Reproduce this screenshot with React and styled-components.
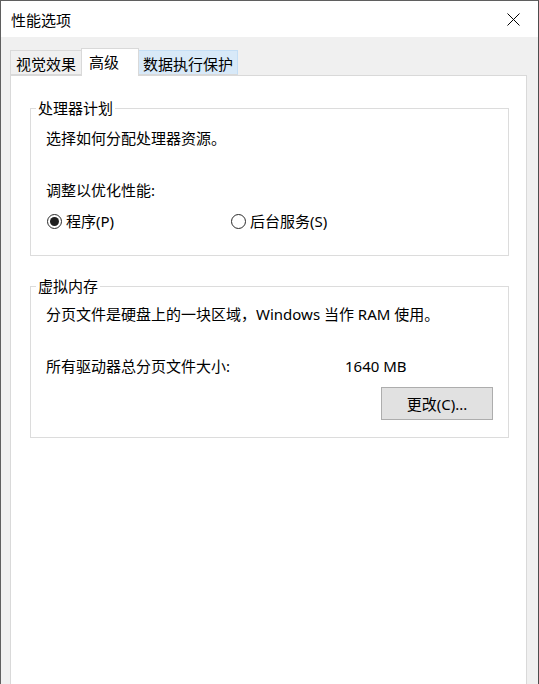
import React, { useState } from 'react';
import styled, { createGlobalStyle } from 'styled-components';

const GlobalStyle = createGlobalStyle`
  html, body {
    margin: 0;
    padding: 0;
    background: #f0f0f0;
  }
  body {
    font-family: 'Noto Sans', 'Noto Sans CJK SC', sans-serif;
    font-size: 15px;
    color: #000;
  }
`;

const Window = styled.div`
  width: 539px;
  height: 684px;
  box-sizing: border-box;
  overflow: hidden;
  display: flex;
  flex-direction: column;
  background: #f0f0f0;
  border-top: 1px solid #5f5f5f;
  border-left: 1px solid #5f5f5f;
  border-right: 1px solid #4d4d4d;
`;

const TitleBar = styled.div`
  height: 36px;
  flex-shrink: 0;
  display: flex;
  align-items: center;
  justify-content: space-between;
  background: #fff;
  padding-left: 10px;
  padding-top: 2px;
  box-sizing: border-box;
  line-height: 20px;
`;

const CloseButton = styled.button`
  width: 46px;
  height: 36px;
  margin-top: -2px;
  margin-right: 2px;
  border: 0;
  padding: 0;
  background: transparent;
  display: flex;
  align-items: center;
  justify-content: center;
`;

const Body = styled.div`
  flex: 1;
  display: flex;
  flex-direction: column;
  padding: 11px 0 0 9px;
`;

const TabRow = styled.div`
  display: flex;
  align-items: flex-end;
  height: 27px;
`;

const Tab = styled.div`
  box-sizing: border-box;
  width: ${p => p.$width}px;
  height: ${p => (p.$active ? 28 : 25)}px;
  margin-bottom: ${p => (p.$active ? -1 : 0)}px;
  padding-left: ${p => p.$pad}px;
  padding-top: 3px;
  line-height: 20px;
  white-space: nowrap;
  position: relative;
  z-index: ${p => (p.$active ? 1 : 0)};
  background: ${p => (p.$active ? '#fff' : p.$hover ? '#d8e9f8' : '#f0f0f0')};
  border: 1px solid ${p => (p.$hover ? '#c4def5' : '#d9d9d9')};
  border-bottom: ${p => (p.$active ? 'none' : '1px solid #d9d9d9')};
  margin-left: ${p => (p.$first ? 0 : -1)}px;
`;

const Panel = styled.div`
  width: 517px;
  height: 640px;
  box-sizing: border-box;
  background: #fff;
  border: 1px solid #d9d9d9;
  padding: 22px 17px 0 19px;
  display: flex;
  flex-direction: column;
  gap: 20px;
`;

const Group = styled.fieldset`
  margin: 0;
  border: 1px solid #dcdcdc;
  padding: ${p => p.$top}px 15px ${p => p.$bottom}px 15px;
  min-width: 0;
  display: flex;
  flex-direction: column;
`;

const Legend = styled.legend`
  padding: 0 2px;
  margin-left: -10px;
  line-height: 20px;
`;

const Line = styled.div`
  line-height: 20px;
  margin-top: ${p => p.$gap || 0}px;
  white-space: nowrap;
`;

const RadioRow = styled.div`
  display: grid;
  grid-template-columns: 184px auto;
  margin-top: 11px;
  line-height: 20px;
`;

const RadioLabel = styled.label`
  display: flex;
  align-items: center;
  gap: 4px;
  cursor: default;
`;

const RadioCircle = styled.span`
  width: 15px;
  height: 15px;
  box-sizing: border-box;
  margin-left: 1px;
  border-radius: 50%;
  border: 1px solid #2b2b2b;
  background: #fff;
  display: flex;
  align-items: center;
  justify-content: center;

  &::after {
    content: '';
    width: 9px;
    height: 9px;
    border-radius: 50%;
    background: ${p => (p.$checked ? '#1f1f1f' : 'transparent')};
  }
`;

const SizeRow = styled.div`
  display: grid;
  grid-template-columns: 299px auto;
  margin-top: 32px;
  line-height: 20px;
`;

const ButtonRow = styled.div`
  display: flex;
  justify-content: flex-end;
  margin-top: 11px;
`;

const Button = styled.button`
  width: 112px;
  height: 33px;
  box-sizing: border-box;
  background: #e1e1e1;
  border: 1px solid #adadad;
  font-family: inherit;
  font-size: 15px;
  line-height: 20px;
  color: #000;
  padding: 0;
`;

const tabs = [
  { label: '视觉效果', width: 72, pad: 5 },
  { label: '高级', width: 58, pad: 7, active: true },
  { label: '数据执行保护', width: 100, pad: 4, hover: true },
];

const Radio = ({ checked, label, onSelect }) => (
  <RadioLabel onClick={onSelect}>
    <RadioCircle $checked={checked} />
    <span>{label}</span>
  </RadioLabel>
);

export default function App() {
  const [mode, setMode] = useState('programs');

  return (
    <>
      <GlobalStyle />
      <Window>
        <TitleBar>
          <span>性能选项</span>
          <CloseButton aria-label="关闭">
            <svg width="13" height="13" viewBox="0 0 13 13">
              <path d="M0.5 0.5 L12.5 12.5 M12.5 0.5 L0.5 12.5" stroke="#000" strokeWidth="1" fill="none" />
            </svg>
          </CloseButton>
        </TitleBar>
        <Body>
          <TabRow>
            {tabs.map((t, i) => (
              <Tab
                key={t.label}
                $width={t.width}
                $pad={t.pad}
                $active={t.active}
                $hover={t.hover}
                $first={i === 0}
              >
                {t.label}
              </Tab>
            ))}
          </TabRow>
          <Panel>
            <Group $top={10} $bottom={24}>
              <Legend>处理器计划</Legend>
              <Line>选择如何分配处理器资源。</Line>
              <Line $gap={32}>调整以优化性能:</Line>
              <RadioRow>
                <Radio checked={mode === 'programs'} label="程序(P)" onSelect={() => setMode('programs')} />
                <Radio checked={mode === 'services'} label="后台服务(S)" onSelect={() => setMode('services')} />
              </RadioRow>
            </Group>
            <Group $top={8} $bottom={17}>
              <Legend>虚拟内存</Legend>
              <Line>分页文件是硬盘上的一块区域，Windows 当作 RAM 使用。</Line>
              <SizeRow>
                <span>所有驱动器总分页文件大小:</span>
                <span>1640 MB</span>
              </SizeRow>
              <ButtonRow>
                <Button>更改(C)...</Button>
              </ButtonRow>
            </Group>
          </Panel>
        </Body>
      </Window>
    </>
  );
}
